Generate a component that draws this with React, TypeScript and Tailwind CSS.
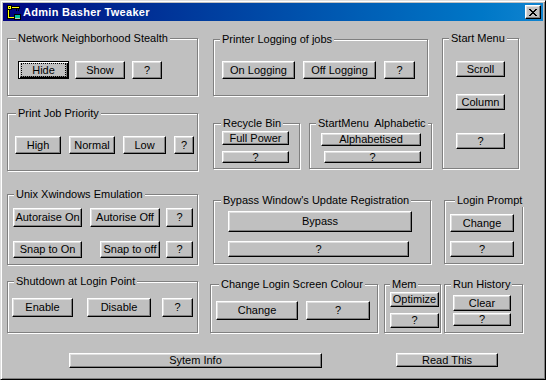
import type { ReactNode } from 'react';

const font = "font-['Liberation_Sans',Arial,sans-serif]";

function Btn({ label, className = '' }: { label: string; className?: string }) {
  return (
    <button
      className={`flex items-center justify-center shrink-0 bg-[#c0c0c0] border border-t-white border-l-white border-r-black border-b-black shadow-[inset_-1px_-1px_0_#808080,inset_1px_1px_0_#dfdfdf] text-[11px] leading-none text-black ${className}`}
    >
      {label}
    </button>
  );
}

function Group({
  title,
  lx,
  className,
  children,
}: {
  title: string;
  lx: string;
  className: string;
  children: ReactNode;
}) {
  return (
    <div className={`relative shrink-0 border border-[#808080] shadow-[inset_1px_1px_0_#fff,1px_1px_0_#fff] ${className}`}>
      <span className={`absolute -top-[8px] ${lx} px-[2px] bg-[#c0c0c0] text-[11px] leading-[14px] whitespace-pre text-black`}>
        {title}
      </span>
      {children}
    </div>
  );
}

function AppIcon() {
  return (
    <svg width="16" height="16" viewBox="0 0 16 16" shapeRendering="crispEdges">
      {/* key */}
      <rect x="1" y="1" width="5" height="5" fill="#000" />
      <rect x="2" y="2" width="3" height="3" fill="#ffff00" />
      <rect x="3" y="3" width="1" height="1" fill="#000" />
      <rect x="6" y="2" width="8" height="3" fill="#000" />
      <rect x="6" y="3" width="7" height="1" fill="#ffff00" />
      <rect x="10" y="5" width="1" height="2" fill="#000" />
      <rect x="12" y="5" width="1" height="2" fill="#000" />
      {/* cable */}
      <rect x="1" y="6" width="3" height="9" fill="#000" />
      <rect x="2" y="6" width="1" height="8" fill="#ffff00" />
      <rect x="2" y="13" width="7" height="2" fill="#000" />
      <rect x="2" y="13" width="6" height="1" fill="#ffff00" />
      {/* computer */}
      <rect x="8" y="10" width="7" height="6" fill="#000" />
      <rect x="9" y="11" width="5" height="3" fill="#00c0a0" />
      <rect x="9" y="14" width="5" height="1" fill="#c0c0c0" />
    </svg>
  );
}

function CloseGlyph() {
  const px: [number, number][] = [
    [0, 0], [1, 0], [6, 0], [7, 0],
    [1, 1], [2, 1], [5, 1], [6, 1],
    [2, 2], [3, 2], [4, 2], [5, 2],
    [3, 3], [4, 3],
    [2, 4], [3, 4], [4, 4], [5, 4],
    [1, 5], [2, 5], [5, 5], [6, 5],
    [0, 6], [1, 6], [6, 6], [7, 6],
  ];
  return (
    <svg width="8" height="7" viewBox="0 0 8 7" shapeRendering="crispEdges">
      {px.map(([x, y]) => (
        <rect key={`${x}-${y}`} x={x} y={y} width="1" height="1" fill="#000" />
      ))}
    </svg>
  );
}

export default function App() {
  return (
    <div className={`w-[546px] h-[380px] bg-[#c0c0c0] border border-t-[#dfdfdf] border-l-[#dfdfdf] border-r-black border-b-black shadow-[inset_1px_1px_0_#fff,inset_-1px_-1px_0_#808080] p-[2px] ${font}`}>
      {/* title bar */}
      <div className="h-[18px] flex items-center bg-linear-to-r from-[#000080] to-[#1084d0]">
        <div className="ml-[3px] w-[16px] h-[16px]">
          <AppIcon />
        </div>
        <span className="ml-[1px] text-[11px] font-bold text-white leading-none tracking-[0.3px]">Admin Basher Tweaker</span>
        <button className="ml-auto mr-[2px] w-[16px] h-[14px] flex items-center justify-center bg-[#c0c0c0] border border-t-white border-l-white border-r-black border-b-black shadow-[inset_-1px_-1px_0_#808080,inset_1px_1px_0_#dfdfdf]">
          <CloseGlyph />
        </button>
      </div>

      {/* body */}
      <div className="flex items-start">
        {/* left column */}
        <div className="flex flex-col w-[191px] ml-[4px] shrink-0">
          <Group title="Network Neighborhood Stealth" lx="left-[8px]" className="mt-[17px] h-[58px] pt-[22px] pl-[10px] flex items-start">
            <div className="relative w-[51px] h-[18px] flex items-center justify-center bg-[#c0c0c0] border border-black shadow-[inset_1px_1px_0_#fff,inset_-1px_-1px_0_#000,inset_-2px_-2px_0_#808080] text-[11px] leading-none">
              Hide
              <span className="absolute inset-x-[2px] inset-y-[1px] border border-dotted border-black" />
            </div>
            <Btn label="Show" className="ml-[6px] w-[50px] h-[18px]" />
            <Btn label="?" className="ml-[7px] w-[30px] h-[18px]" />
          </Group>

          <Group title="Print Job Priority" lx="left-[8px]" className="mt-[17px] h-[58px] pt-[22px] pl-[7px] flex items-start">
            <Btn label="High" className="w-[46px] h-[18px]" />
            <Btn label="Normal" className="ml-[8px] w-[46px] h-[18px]" />
            <Btn label="Low" className="ml-[8px] w-[43px] h-[18px]" />
            <Btn label="?" className="ml-[8px] w-[20px] h-[18px]" />
          </Group>

          <Group title="Unix Xwindows Emulation" lx="left-[6px]" className="mt-[23px] h-[71px] pt-[13px] pl-[5px] flex flex-col">
            <div className="flex items-start">
              <Btn label="Autoraise On" className="w-[69px] h-[19px]" />
              <Btn label="Autorise Off" className="ml-[8px] w-[70px] h-[19px]" />
              <Btn label="?" className="ml-[6px] w-[27px] h-[19px]" />
            </div>
            <div className="flex items-start mt-[14px]">
              <Btn label="Snap to On" className="w-[69px] h-[17px]" />
              <Btn label="Snap to off" className="ml-[18px] w-[60px] h-[17px]" />
              <Btn label="?" className="ml-[6px] w-[27px] h-[17px]" />
            </div>
          </Group>

          <Group title="Shutdown at Login Point" lx="left-[6px]" className="mt-[16px] h-[52px] pt-[16px] pl-[4px] flex items-start">
            <Btn label="Enable" className="w-[61px] h-[19px]" />
            <Btn label="Disable" className="ml-[14px] w-[64px] h-[19px]" />
            <Btn label="?" className="ml-[11px] w-[31px] h-[19px]" />
          </Group>
        </div>

        {/* right section */}
        <div className="flex flex-col ml-[12px]">
          <div className="flex items-start mt-[17px]">
            <div className="flex flex-col ml-[3px] w-[219px]">
              <Group title="Printer Logging of jobs" lx="left-[6px]" className="mt-[1px] w-[215px] h-[57px] pt-[21px] pl-[8px] flex items-start">
                <Btn label="On Logging" className="w-[73px] h-[18px]" />
                <Btn label="Off Logging" className="ml-[8px] w-[73px] h-[18px]" />
                <Btn label="?" className="ml-[8px] w-[31px] h-[18px]" />
              </Group>
              <div className="flex items-start mt-[27px]">
                <Group title="Recycle Bin" lx="left-[7px]" className="w-[87px] h-[46px] pt-[7px] pl-[8px] flex flex-col">
                  <Btn label="Full Power" className="w-[67px] h-[14px]" />
                  <Btn label="?" className="mt-[6px] w-[67px] h-[12px]" />
                </Group>
                <Group title="StartMenu  Alphabetic" lx="left-[6px]" className="ml-[9px] w-[123px] h-[46px] pt-[9px] pl-[11px] flex flex-col">
                  <Btn label="Alphabetised" className="w-[100px] h-[13px]" />
                  <Btn label="?" className="mt-[5px] ml-[3px] w-[97px] h-[12px]" />
                </Group>
              </div>
            </div>
            <Group title="Start Menu" lx="left-[6px]" className="ml-[10px] w-[77px] h-[131px] pt-[22px] pl-[13px] flex flex-col">
              <Btn label="Scroll" className="w-[49px] h-[16px]" />
              <Btn label="Column" className="mt-[17px] w-[49px] h-[16px]" />
              <Btn label="?" className="mt-[23px] w-[49px] h-[16px]" />
            </Group>
          </div>

          <div className="flex items-start mt-[31px]">
            <Group title="Bypass Window's Update Registration" lx="left-[7px]" className="ml-[3px] w-[218px] h-[64px] pt-[10px] pl-[14px] flex flex-col">
              <Btn label="Bypass" className="w-[184px] h-[21px]" />
              <Btn label="?" className="mt-[9px] w-[181px] h-[16px]" />
            </Group>
            <Group title="Login Prompt" lx="left-[10px]" className="ml-[13px] w-[79px] h-[64px] pt-[13px] pl-[5px] flex flex-col">
              <Btn label="Change" className="w-[64px] h-[18px]" />
              <Btn label="?" className="mt-[9px] w-[64px] h-[16px]" />
            </Group>
          </div>

          <div className="flex items-start mt-[20px]">
            <Group title="Change Login Screen Colour" lx="left-[8px]" className="w-[168px] h-[49px] pt-[16px] pl-[5px] flex items-start">
              <Btn label="Change" className="w-[82px] h-[19px]" />
              <Btn label="?" className="ml-[8px] w-[64px] h-[19px]" />
            </Group>
            <Group title="Mem" lx="left-[5px]" className="ml-[6px] w-[57px] h-[49px] pt-[7px] pl-[5px] flex flex-col">
              <Btn label="Optimize" className="w-[49px] h-[15px]" />
              <Btn label="?" className="mt-[6px] w-[49px] h-[15px]" />
            </Group>
            <Group title="Run History" lx="left-[6px]" className="ml-[3px] w-[79px] h-[49px] pt-[10px] pl-[8px] flex flex-col">
              <Btn label="Clear" className="w-[58px] h-[16px]" />
              <Btn label="?" className="mt-[2px] w-[58px] h-[13px]" />
            </Group>
          </div>
        </div>
      </div>

      {/* bottom buttons */}
      <div className="flex items-start mt-[20px]">
        <Btn label="Sytem Info" className="ml-[66px] w-[253px] h-[15px]" />
        <Btn label="Read This" className="ml-[74px] w-[102px] h-[14px]" />
      </div>
    </div>
  );
}
